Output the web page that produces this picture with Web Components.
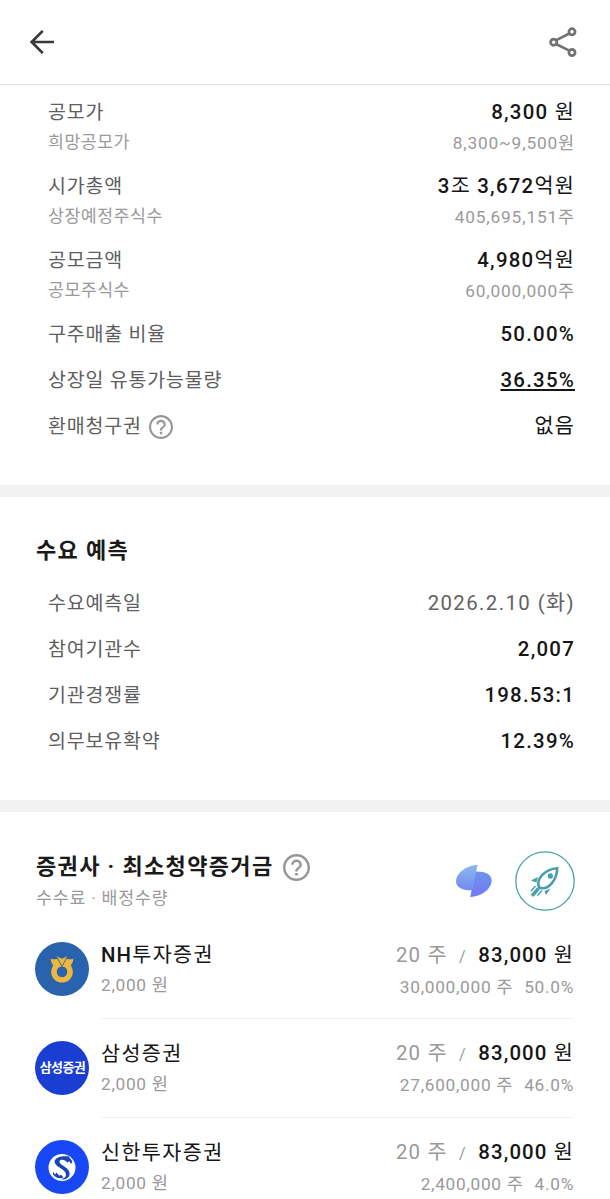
<!DOCTYPE html>
<html lang="ko">
<head>
<meta charset="utf-8">
<title>공모주 상세</title>
<style>
html,body{margin:0;background:#fff}
body{width:610px;height:1199px;overflow:hidden;font-family:Roboto,"Noto Sans CJK KR",sans-serif;-webkit-font-smoothing:antialiased}
</style>
</head>
<body>
<ipo-page></ipo-page>
<script>
const define=(name,html)=>customElements.define(name,class extends HTMLElement{
  connectedCallback(){
    if(this.shadowRoot)return;
    this.attachShadow({mode:'open'}).innerHTML=typeof html==='function'?html(this):html;
  }
});
const attr=(el,n)=>el.getAttribute(n)||'';
// Hangul stays at regular weight beside medium-weight digits
const mix=s=>s.replace(/[가-힣]+/g,'<span class="k">$&</span>');

define('help-icon',`<style>:host{display:block;white-space:normal;width:var(--s,24px);height:var(--s,24px)}svg{display:block;width:100%;height:100%}</style><svg viewBox="2 2 20 20" fill="#979797"><path d="M11 18h2v-2h-2v2zm1-16C6.480 2 2 6.480 2 12s4.480 10 10 10 10-4.480 10-10S17.520 2 12 2zm0 18.200c-4.520 0-8.200-3.680-8.200-8.200S7.480 3.800 12 3.800s8.200 3.680 8.200 8.200-3.680 8.200-8.200 8.200zm0-14.200c-2.210 0-4 1.790-4 4h1.850c0-1.180.97-2.150 2.150-2.150s2.150.97 2.150 2.150c0 2-3.100 1.750-3.100 5h1.850c0-2.250 3.100-2.500 3.100-5 0-2.210-1.790-4-4-4z"/></svg>`);

define('top-bar',`<style>:host{display:flex;justify-content:space-between;align-items:center;box-sizing:border-box;height:85px;padding:0 32px 0 30px;border-bottom:1.5px solid #dedede}svg{display:block}</style>
<svg width="24" height="24" viewBox="0 0 24 24" fill="none" stroke="#3a3a3a" stroke-width="2.7"><path d="M24 12H2M12.800 .9 1.700 12l11.100 11.100"/></svg>
<svg width="30" height="32" viewBox="0 0 30 32" fill="none" stroke="#727272" stroke-width="2.700"><path d="M8 14.400 21.800 7.300M8 18 21.800 24.900"/><circle cx="5.700" cy="16.200" r="3.100"/><circle cx="24" cy="5.800" r="3.100"/><circle cx="24" cy="26.500" r="3.100"/></svg>`);

define('info-row',el=>`<style>
:host{display:flex;justify-content:space-between;padding:8px 35px 8px 48px}
.k{font-weight:400;font-size:1.015em}
.l,.r{display:flex;flex-direction:column}.r{align-items:flex-end}
.l{margin-top:1px;margin-bottom:-1px}
.a{display:flex;align-items:center;gap:7.4px;line-height:30px;font-size:19.5px;letter-spacing:.8px;color:#5e5e5e;white-space:pre}
.b{line-height:28px;font-size:17.3px;letter-spacing:.5px;color:#9a9a9a;white-space:pre}
.v{display:block;font-size:20.4px;letter-spacing:1.25px;color:#161616;font-weight:500}
.v.soft{color:#626262;font-weight:400;letter-spacing:1.4px}
.v.u{text-decoration:underline;text-underline-offset:2px;text-decoration-thickness:1.5px}
.r .b{padding-top:2px;margin-bottom:-2px;letter-spacing:.83px}
</style>
<div class="l"><div class="a"><span>${attr(el,'label')}</span><slot></slot></div>${el.hasAttribute('sub')?`<div class="b">${attr(el,'sub')}</div>`:''}</div>
<div class="r"><div class="a v ${attr(el,'kind')}">${mix(attr(el,'value'))}</div>${el.hasAttribute('note')?`<div class="b">${mix(attr(el,'note'))}</div>`:''}</div>`);

define('section-gap',`<style>:host{display:block;height:12px;background:#f2f2f2}</style>`);
define('section-title',`<style>:host{display:flex;align-items:center;gap:9px;font-weight:700;font-size:22px;letter-spacing:1.35px;line-height:34px;color:#1a1a1a;white-space:pre}</style><slot></slot>`);

const logos={
nh:`<svg viewBox="0 0 54 54"><circle cx="27" cy="27" r="27" fill="#2a63ad"/><circle cx="27" cy="29.800" r="8" fill="none" stroke="#edb83d" stroke-width="5.600"/><path d="M15.800 16.500C18 18.300 20 16.600 23 17L27 24.500 19 27C19.500 22.500 15.500 22 15.800 16.500zM38.200 16.500C36 18.300 34 16.600 31 17L27 24.500 35 27C34.500 22.500 38.500 22 38.200 16.500z" fill="#edb83d"/><path d="M21 13.200L27 16.400 33 13.200 27 24.500z" fill="#edb83d" stroke="#2a63ad" stroke-width=".9"/><circle cx="27" cy="29.800" r="5.200" fill="#2a63ad"/></svg>`,
ss:`<div class="ss">삼성증권</div>`,
sh:`<svg viewBox="0 0 54 54"><circle cx="27" cy="27" r="27" fill="#1848f5"/><circle cx="27" cy="27.500" r="13.500" fill="#fff"/><path d="M33.500 16.300C26 15.500 19.500 17.500 19.600 21.700 19.700 27 31 29 31 34.500 31 37.500 28.500 39 25 39 31 40.500 35 37.500 34.600 33 34 27 24.500 25.500 24.500 21.500 24.500 19.500 27.500 19 30 20.500L32.500 22.500 34.300 21.200 36 24 37.500 21.500z" fill="#1848b5"/><path d="M18 31.500l2 3 1.500-2 2.500 3 2.500-.5 2 2.500c-4 1.500-8 .5-10.500-3z" fill="#1848b5"/></svg>`};
define('broker-row',el=>`<style>
:host{display:flex;gap:12px;height:98.8px;padding:0 36px 0 35.4px}
.logo{width:53.6px;height:54px;margin-top:2.8px}
.logo svg{display:block;width:54px;height:54px}
.ss{width:54px;height:54px;border-radius:50%;background:#1a3ed2;color:#fff;font:700 13px/52px "Noto Sans CJK KR",sans-serif;letter-spacing:-.7px;text-align:center}
.body{flex:1;display:flex;justify-content:space-between;box-sizing:border-box;height:79.8px;border-bottom:1.5px solid #f1f1f1;white-space:nowrap}
.l{padding-top:1px}.r{text-align:right;padding-top:.5px}
.a,.b{white-space:pre}
.a{line-height:30px;font-size:20.4px;letter-spacing:1.15px;color:#161616;font-weight:500}
.l .a .k{letter-spacing:1.4px}
.b{line-height:31px;font-size:17.3px;letter-spacing:.7px;color:#9a9a9a}
.r .b{line-height:30px}
.k{font-weight:400;font-size:1.015em}.q{color:#999;font-weight:400}.s{font-size:16px;padding:0 5.2px}
.p{padding-left:6px}
</style>
<div class="logo">${logos[attr(el,'logo')]}</div>
<div class="body"><div class="l"><div class="a">${mix(attr(el,'name'))}</div><div class="b">${mix('2,000 원')}</div></div>
<div class="r"><div class="a"><span class="q">${mix('20 주')} <span class="s">/</span> </span>${mix('83,000 원')}</div><div class="b">${mix(attr(el,'qty'))}<span class="p"> ${attr(el,'pct')}</span></div></div></div>`);

define('brand-icons',`<style>:host{display:flex;align-items:center;gap:21px}svg{display:block}</style>
<svg width="38" height="34" viewBox="0 0 38 34"><defs><linearGradient id="a" x1="0" y1="0" x2="0" y2="1"><stop stop-color="#8db8ef"/><stop offset="1" stop-color="#7289ee"/></linearGradient><linearGradient id="b" x1="0" y1="0" x2="0" y2="1"><stop stop-color="#6d94e8"/><stop offset="1" stop-color="#7478f4"/></linearGradient></defs><path d="M19.500 7.500C29.500 7.300 35.600 10.500 35.600 16.500 35.600 25 25 32.700 14.200 33z" fill="url(#b)"/><path d="M21.600 1C10.500 1.200 0 9 0 17.500c0 6 6.500 9 15.800 8.800z" fill="url(#a)"/></svg>
<svg width="60" height="60" viewBox="0 0 60 60" fill="none" stroke="#4a9fae"><circle cx="30" cy="30" r="29.200" stroke-width="1.300"/><path d="M24.200 36.500C20.500 28.500 29.500 18 42.200 17.200 42 29.500 32.500 40 24.200 36.500z" stroke-width="2.600"/><circle cx="35.300" cy="25" r="2.700" fill="#4a9fae" stroke="none"/><path d="M15.800 29.500l7-3.500-1.300 5.500zM31 44l4.500-6.500-6 2.500z" fill="#4a9fae" stroke="none"/><path d="M23.500 37.500l-6.500 7.300" stroke-width="3.400"/><path d="M20.500 35l-4.500 5M27 39.500l-4.500 5" stroke-width="1.500"/></svg>`);

define('ipo-page',`<style>
:host{display:block}
.s1{padding:4px 0 36px}
.s2{padding:37px 0 36px}
.s2 section-title{padding:0 36px;margin-bottom:12px}
.head{display:flex;justify-content:space-between;padding:38px 35px 0 36px;height:89.2px}
.sub{font-size:17.3px;letter-spacing:.8px;line-height:28px;color:#9a9a9a}
brand-icons{height:60px;margin-top:1px}
</style>
<top-bar></top-bar>
<div class="s1">
<info-row label="공모가" sub="희망공모가" value="8,300 원" note="8,300~9,500원"></info-row>
<info-row label="시가총액" sub="상장예정주식수" value="3조 3,672억원" note="405,695,151주"></info-row>
<info-row label="공모금액" sub="공모주식수" value="4,980억원" note="60,000,000주"></info-row>
<info-row label="구주매출 비율" value="50.00%"></info-row>
<info-row label="상장일 유통가능물량" value="36.35%" kind="u"></info-row>
<info-row label="환매청구권" value="없음"><help-icon></help-icon></info-row>
</div>
<section-gap></section-gap>
<div class="s2">
<section-title>수요 예측</section-title>
<info-row label="수요예측일" value="2026.2.10 (화)" kind="soft"></info-row>
<info-row label="참여기관수" value="2,007"></info-row>
<info-row label="기관경쟁률" value="198.53:1"></info-row>
<info-row label="의무보유확약" value="12.39%"></info-row>
</div>
<section-gap></section-gap>
<div class="head"><div><section-title>증권사 · 최소청약증거금<help-icon style="--s:27px"></help-icon></section-title><div class="sub">수수료 · 배정수량</div></div><brand-icons></brand-icons></div>
<broker-row logo="nh" name="NH투자증권" qty="30,000,000 주" pct="50.0%"></broker-row>
<broker-row logo="ss" name="삼성증권" qty="27,600,000 주" pct="46.0%"></broker-row>
<broker-row logo="sh" name="신한투자증권" qty="2,400,000 주" pct="4.0%"></broker-row>`);
</script>
</body>
</html>
